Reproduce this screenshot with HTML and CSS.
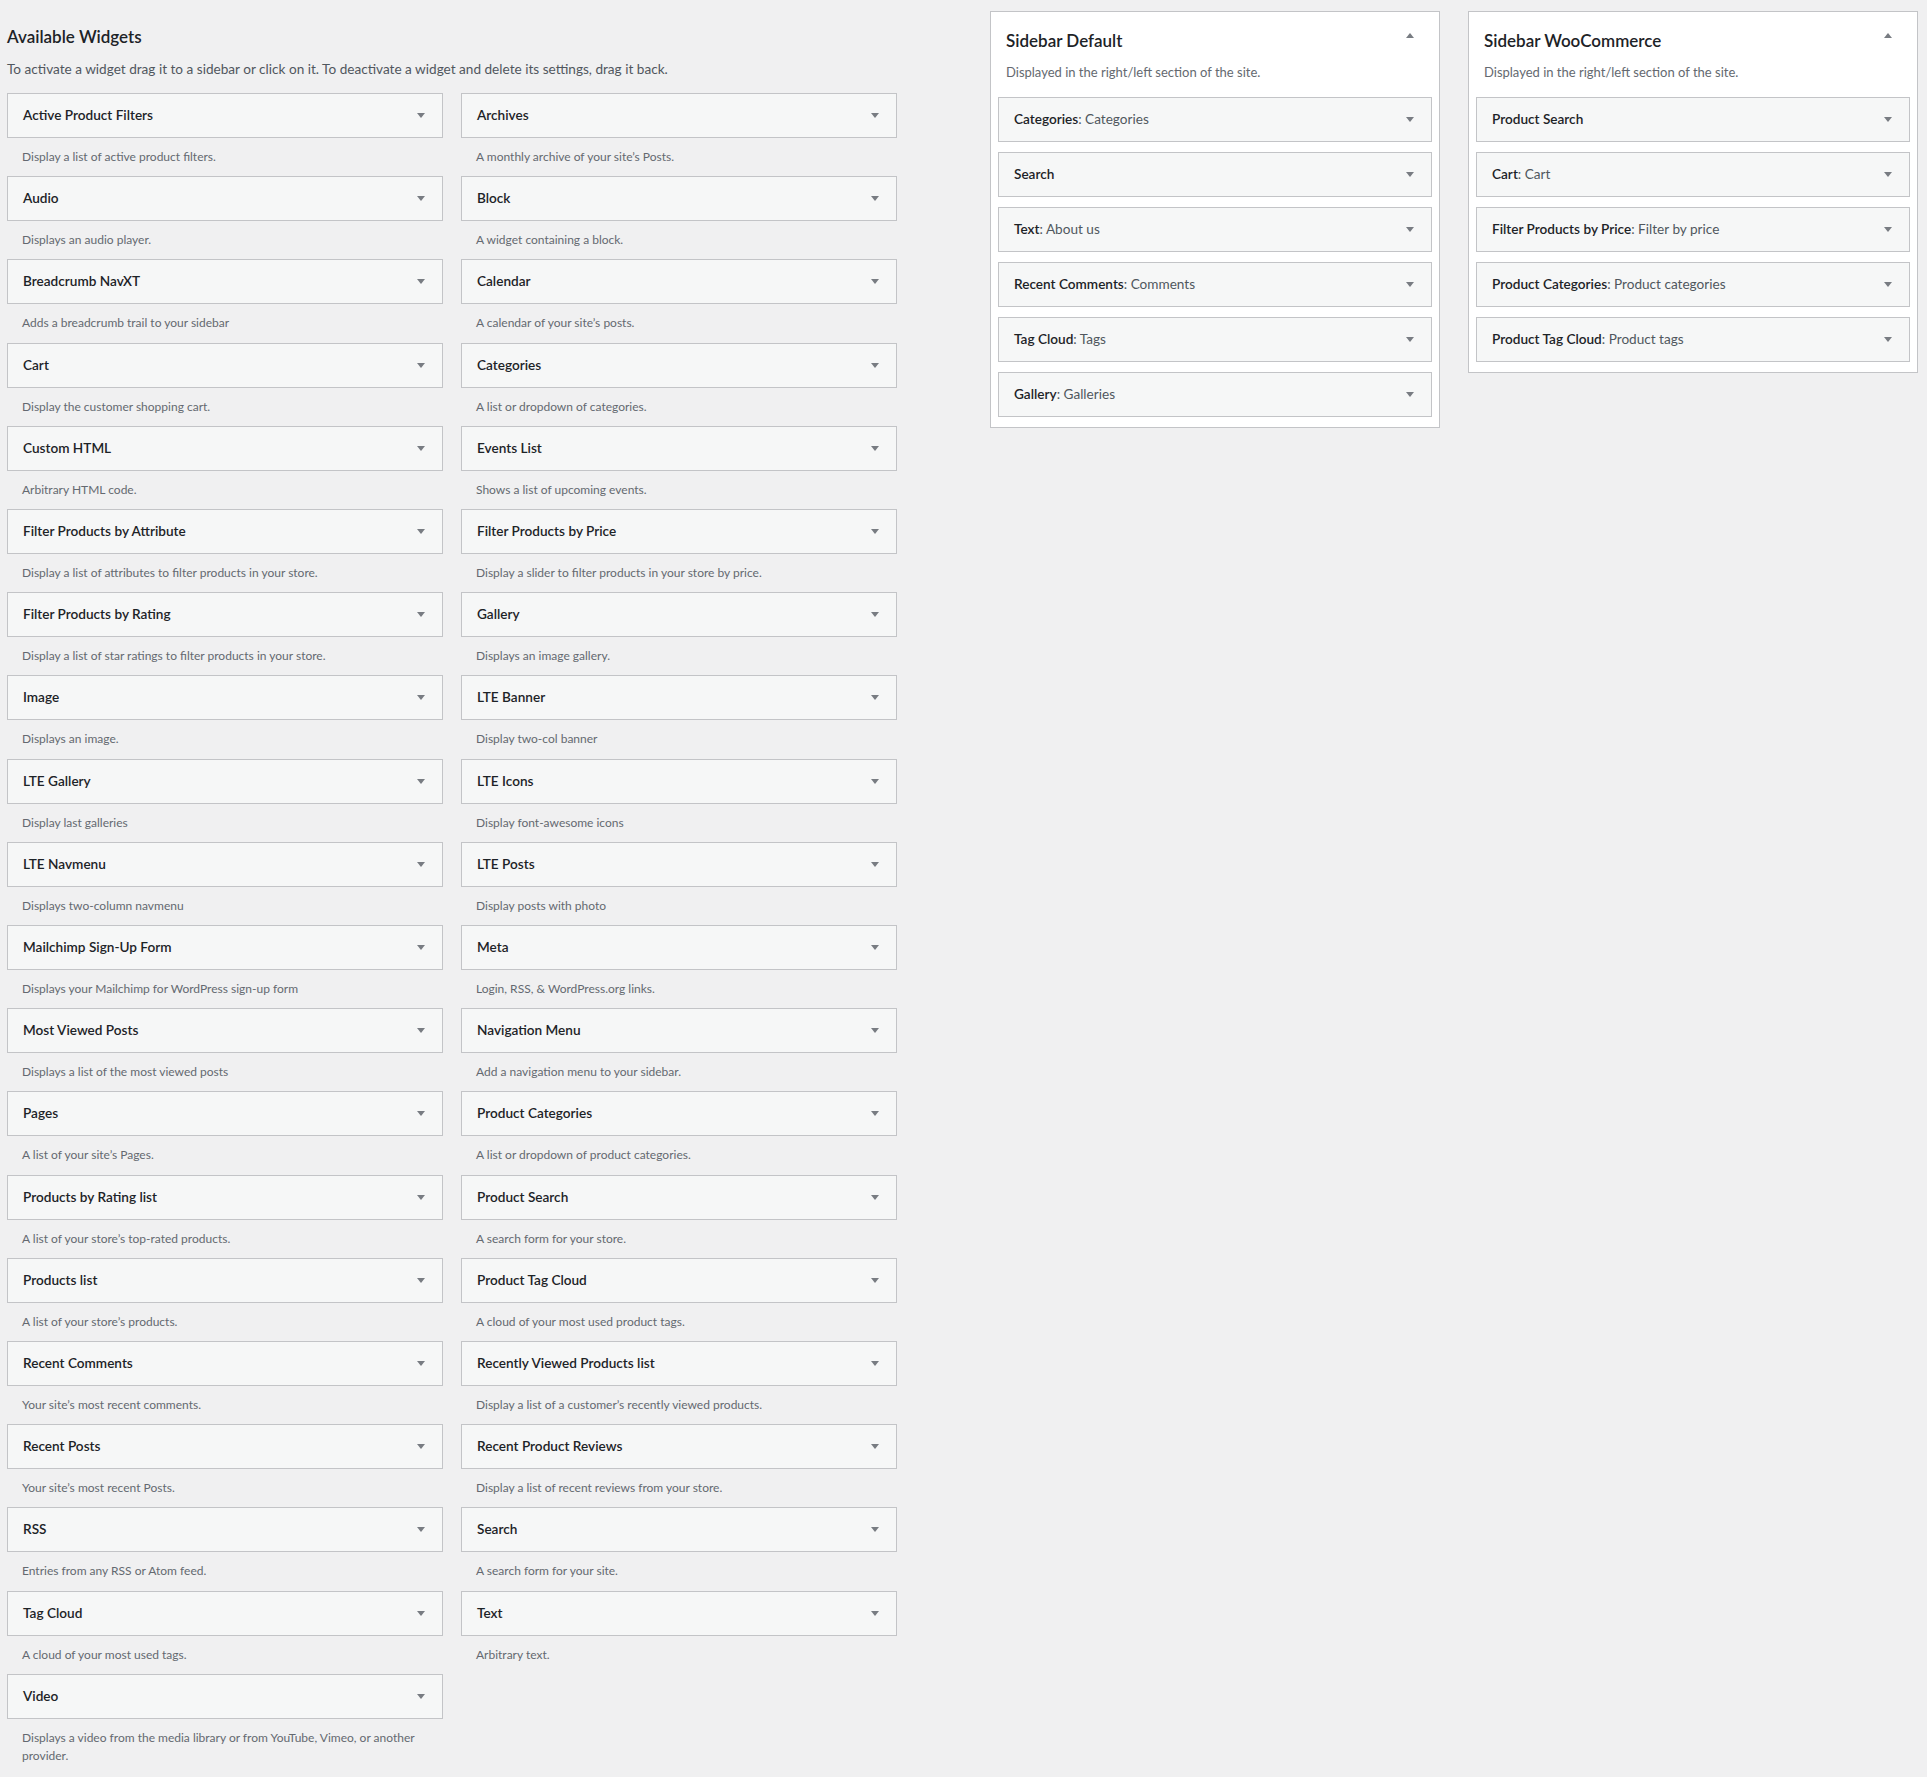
FILE: index.html
```
<!DOCTYPE html>
<html>
<head>
    <title>Widgets</title>
    <link rel="stylesheet" href="styles.css">
</head>
<body>

<div class="wrap">

<div class="available">
    <h2 class="heading">Available Widgets</h2>
    <p class="intro">To activate a widget drag it to a sidebar or click on it. To deactivate a widget and delete its settings, drag it back.</p>

    <div class="widget-list">
        <div class="widget"><div class="widget-top"><h3>Active Product Filters</h3><span class="arrow"></span></div><p class="widget-desc">Display a list of active product filters.</p></div>
        <div class="widget"><div class="widget-top"><h3>Archives</h3><span class="arrow"></span></div><p class="widget-desc">A monthly archive of your site’s Posts.</p></div>
        <div class="widget"><div class="widget-top"><h3>Audio</h3><span class="arrow"></span></div><p class="widget-desc">Displays an audio player.</p></div>
        <div class="widget"><div class="widget-top"><h3>Block</h3><span class="arrow"></span></div><p class="widget-desc">A widget containing a block.</p></div>
        <div class="widget"><div class="widget-top"><h3>Breadcrumb NavXT</h3><span class="arrow"></span></div><p class="widget-desc">Adds a breadcrumb trail to your sidebar</p></div>
        <div class="widget"><div class="widget-top"><h3>Calendar</h3><span class="arrow"></span></div><p class="widget-desc">A calendar of your site’s posts.</p></div>
        <div class="widget"><div class="widget-top"><h3>Cart</h3><span class="arrow"></span></div><p class="widget-desc">Display the customer shopping cart.</p></div>
        <div class="widget"><div class="widget-top"><h3>Categories</h3><span class="arrow"></span></div><p class="widget-desc">A list or dropdown of categories.</p></div>
        <div class="widget"><div class="widget-top"><h3>Custom HTML</h3><span class="arrow"></span></div><p class="widget-desc">Arbitrary HTML code.</p></div>
        <div class="widget"><div class="widget-top"><h3>Events List</h3><span class="arrow"></span></div><p class="widget-desc">Shows a list of upcoming events.</p></div>
        <div class="widget"><div class="widget-top"><h3>Filter Products by Attribute</h3><span class="arrow"></span></div><p class="widget-desc">Display a list of attributes to filter products in your store.</p></div>
        <div class="widget"><div class="widget-top"><h3>Filter Products by Price</h3><span class="arrow"></span></div><p class="widget-desc">Display a slider to filter products in your store by price.</p></div>
        <div class="widget"><div class="widget-top"><h3>Filter Products by Rating</h3><span class="arrow"></span></div><p class="widget-desc">Display a list of star ratings to filter products in your store.</p></div>
        <div class="widget"><div class="widget-top"><h3>Gallery</h3><span class="arrow"></span></div><p class="widget-desc">Displays an image gallery.</p></div>
        <div class="widget"><div class="widget-top"><h3>Image</h3><span class="arrow"></span></div><p class="widget-desc">Displays an image.</p></div>
        <div class="widget"><div class="widget-top"><h3>LTE Banner</h3><span class="arrow"></span></div><p class="widget-desc">Display two-col banner</p></div>
        <div class="widget"><div class="widget-top"><h3>LTE Gallery</h3><span class="arrow"></span></div><p class="widget-desc">Display last galleries</p></div>
        <div class="widget"><div class="widget-top"><h3>LTE Icons</h3><span class="arrow"></span></div><p class="widget-desc">Display font-awesome icons</p></div>
        <div class="widget"><div class="widget-top"><h3>LTE Navmenu</h3><span class="arrow"></span></div><p class="widget-desc">Displays two-column navmenu</p></div>
        <div class="widget"><div class="widget-top"><h3>LTE Posts</h3><span class="arrow"></span></div><p class="widget-desc">Display posts with photo</p></div>
        <div class="widget"><div class="widget-top"><h3>Mailchimp Sign-Up Form</h3><span class="arrow"></span></div><p class="widget-desc">Displays your Mailchimp for WordPress sign-up form</p></div>
        <div class="widget"><div class="widget-top"><h3>Meta</h3><span class="arrow"></span></div><p class="widget-desc">Login, RSS, &amp; WordPress.org links.</p></div>
        <div class="widget"><div class="widget-top"><h3>Most Viewed Posts</h3><span class="arrow"></span></div><p class="widget-desc">Displays a list of the most viewed posts</p></div>
        <div class="widget"><div class="widget-top"><h3>Navigation Menu</h3><span class="arrow"></span></div><p class="widget-desc">Add a navigation menu to your sidebar.</p></div>
        <div class="widget"><div class="widget-top"><h3>Pages</h3><span class="arrow"></span></div><p class="widget-desc">A list of your site’s Pages.</p></div>
        <div class="widget"><div class="widget-top"><h3>Product Categories</h3><span class="arrow"></span></div><p class="widget-desc">A list or dropdown of product categories.</p></div>
        <div class="widget"><div class="widget-top"><h3>Products by Rating list</h3><span class="arrow"></span></div><p class="widget-desc">A list of your store’s top-rated products.</p></div>
        <div class="widget"><div class="widget-top"><h3>Product Search</h3><span class="arrow"></span></div><p class="widget-desc">A search form for your store.</p></div>
        <div class="widget"><div class="widget-top"><h3>Products list</h3><span class="arrow"></span></div><p class="widget-desc">A list of your store’s products.</p></div>
        <div class="widget"><div class="widget-top"><h3>Product Tag Cloud</h3><span class="arrow"></span></div><p class="widget-desc">A cloud of your most used product tags.</p></div>
        <div class="widget"><div class="widget-top"><h3>Recent Comments</h3><span class="arrow"></span></div><p class="widget-desc">Your site’s most recent comments.</p></div>
        <div class="widget"><div class="widget-top"><h3>Recently Viewed Products list</h3><span class="arrow"></span></div><p class="widget-desc">Display a list of a customer’s recently viewed products.</p></div>
        <div class="widget"><div class="widget-top"><h3>Recent Posts</h3><span class="arrow"></span></div><p class="widget-desc">Your site’s most recent Posts.</p></div>
        <div class="widget"><div class="widget-top"><h3>Recent Product Reviews</h3><span class="arrow"></span></div><p class="widget-desc">Display a list of recent reviews from your store.</p></div>
        <div class="widget"><div class="widget-top"><h3>RSS</h3><span class="arrow"></span></div><p class="widget-desc">Entries from any RSS or Atom feed.</p></div>
        <div class="widget"><div class="widget-top"><h3>Search</h3><span class="arrow"></span></div><p class="widget-desc">A search form for your site.</p></div>
        <div class="widget"><div class="widget-top"><h3>Tag Cloud</h3><span class="arrow"></span></div><p class="widget-desc">A cloud of your most used tags.</p></div>
        <div class="widget"><div class="widget-top"><h3>Text</h3><span class="arrow"></span></div><p class="widget-desc">Arbitrary text.</p></div>
        <div class="widget"><div class="widget-top"><h3>Video</h3><span class="arrow"></span></div><p class="widget-desc">Displays a video from the media library or from YouTube, Vimeo, or another provider.</p></div>
    </div>
</div>

<div class="sidebars">

    <div class="holder">
        <div class="sidebar-name">
            <h2>Sidebar Default</h2>
            <span class="arrow arrow-up"></span>
        </div>
        <p class="sidebar-desc">Displayed in the right/left section of the site.</p>
        <div class="widget-top"><h3>Categories<span class="in-title">: Categories</span></h3><span class="arrow"></span></div>
        <div class="widget-top"><h3>Search</h3><span class="arrow"></span></div>
        <div class="widget-top"><h3>Text<span class="in-title">: About us</span></h3><span class="arrow"></span></div>
        <div class="widget-top"><h3>Recent Comments<span class="in-title">: Comments</span></h3><span class="arrow"></span></div>
        <div class="widget-top"><h3>Tag Cloud<span class="in-title">: Tags</span></h3><span class="arrow"></span></div>
        <div class="widget-top"><h3>Gallery<span class="in-title">: Galleries</span></h3><span class="arrow"></span></div>
    </div>

    <div class="holder">
        <div class="sidebar-name">
            <h2>Sidebar WooCommerce</h2>
            <span class="arrow arrow-up"></span>
        </div>
        <p class="sidebar-desc">Displayed in the right/left section of the site.</p>
        <div class="widget-top"><h3>Product Search</h3><span class="arrow"></span></div>
        <div class="widget-top"><h3>Cart<span class="in-title">: Cart</span></h3><span class="arrow"></span></div>
        <div class="widget-top"><h3>Filter Products by Price<span class="in-title">: Filter by price</span></h3><span class="arrow"></span></div>
        <div class="widget-top"><h3>Product Categories<span class="in-title">: Product categories</span></h3><span class="arrow"></span></div>
        <div class="widget-top"><h3>Product Tag Cloud<span class="in-title">: Product tags</span></h3><span class="arrow"></span></div>
    </div>

</div>

</div>

</body>
</html>
```

FILE: styles.css
```
body{
    margin: 0;
    background-color: #f0f0f1;
    color: #1d2327;
    font-family: "Lato", "Liberation Sans", sans-serif;
    font-size: 13px;
    line-height: 1.4;
}

.wrap{
    display: flex;
    align-items: flex-start;
    padding-left: 7px;
}

.available{
    width: 890px;
}

.heading{
    margin: 26px 0 0;
    font-size: 17px;
    font-weight: 600;
    line-height: 22px;
}

.intro{
    margin: 12px 0 15px;
    font-size: 13.6px;
    line-height: 18px;
    color: #50575e;
}

.widget-list{
    display: grid;
    grid-template-columns: 436px 436px;
    column-gap: 18px;
}

.widget-top{
    display: flex;
    align-items: center;
    background-color: #f6f7f7;
    border: 1px solid #c3c4c7;
    padding-right: 17px;
}

.widget-top h3{
    flex: 1;
    margin: 0;
    padding: 15px;
    font-size: 13.6px;
    font-weight: 600;
    line-height: 13px;
}

.in-title{
    font-weight: normal;
    color: #50575e;
}

.arrow{
    width: 0;
    height: 0;
    border-left: 4px solid transparent;
    border-right: 4px solid transparent;
    border-top: 5px solid #787c82;
}

.arrow-up{
    border-top: 0;
    border-bottom: 5px solid #787c82;
    margin: 5px 18px 0 0;
}

.widget-desc{
    margin: 0;
    padding: 10px 15px;
    font-size: 12px;
    line-height: 18.2px;
    color: #646970;
}

.sidebars{
    display: flex;
    align-items: flex-start;
    gap: 28px;
    margin-left: 93px;
    margin-top: 11px;
}

.holder{
    width: 434px;
    background-color: #fff;
    border: 1px solid #c3c4c7;
    padding: 0 7px 0 7px;
}

.sidebar-name{
    display: flex;
    align-items: flex-start;
    padding: 16px 0 0 8px;
}

.sidebar-name h2{
    flex: 1;
    margin: 0;
    font-size: 17px;
    font-weight: 600;
    line-height: 25px;
}

.sidebar-desc{
    margin: 0;
    padding: 10px 8px 16px;
    color: #646970;
}

.holder .widget-top{
    margin-bottom: 10px;
}
```
